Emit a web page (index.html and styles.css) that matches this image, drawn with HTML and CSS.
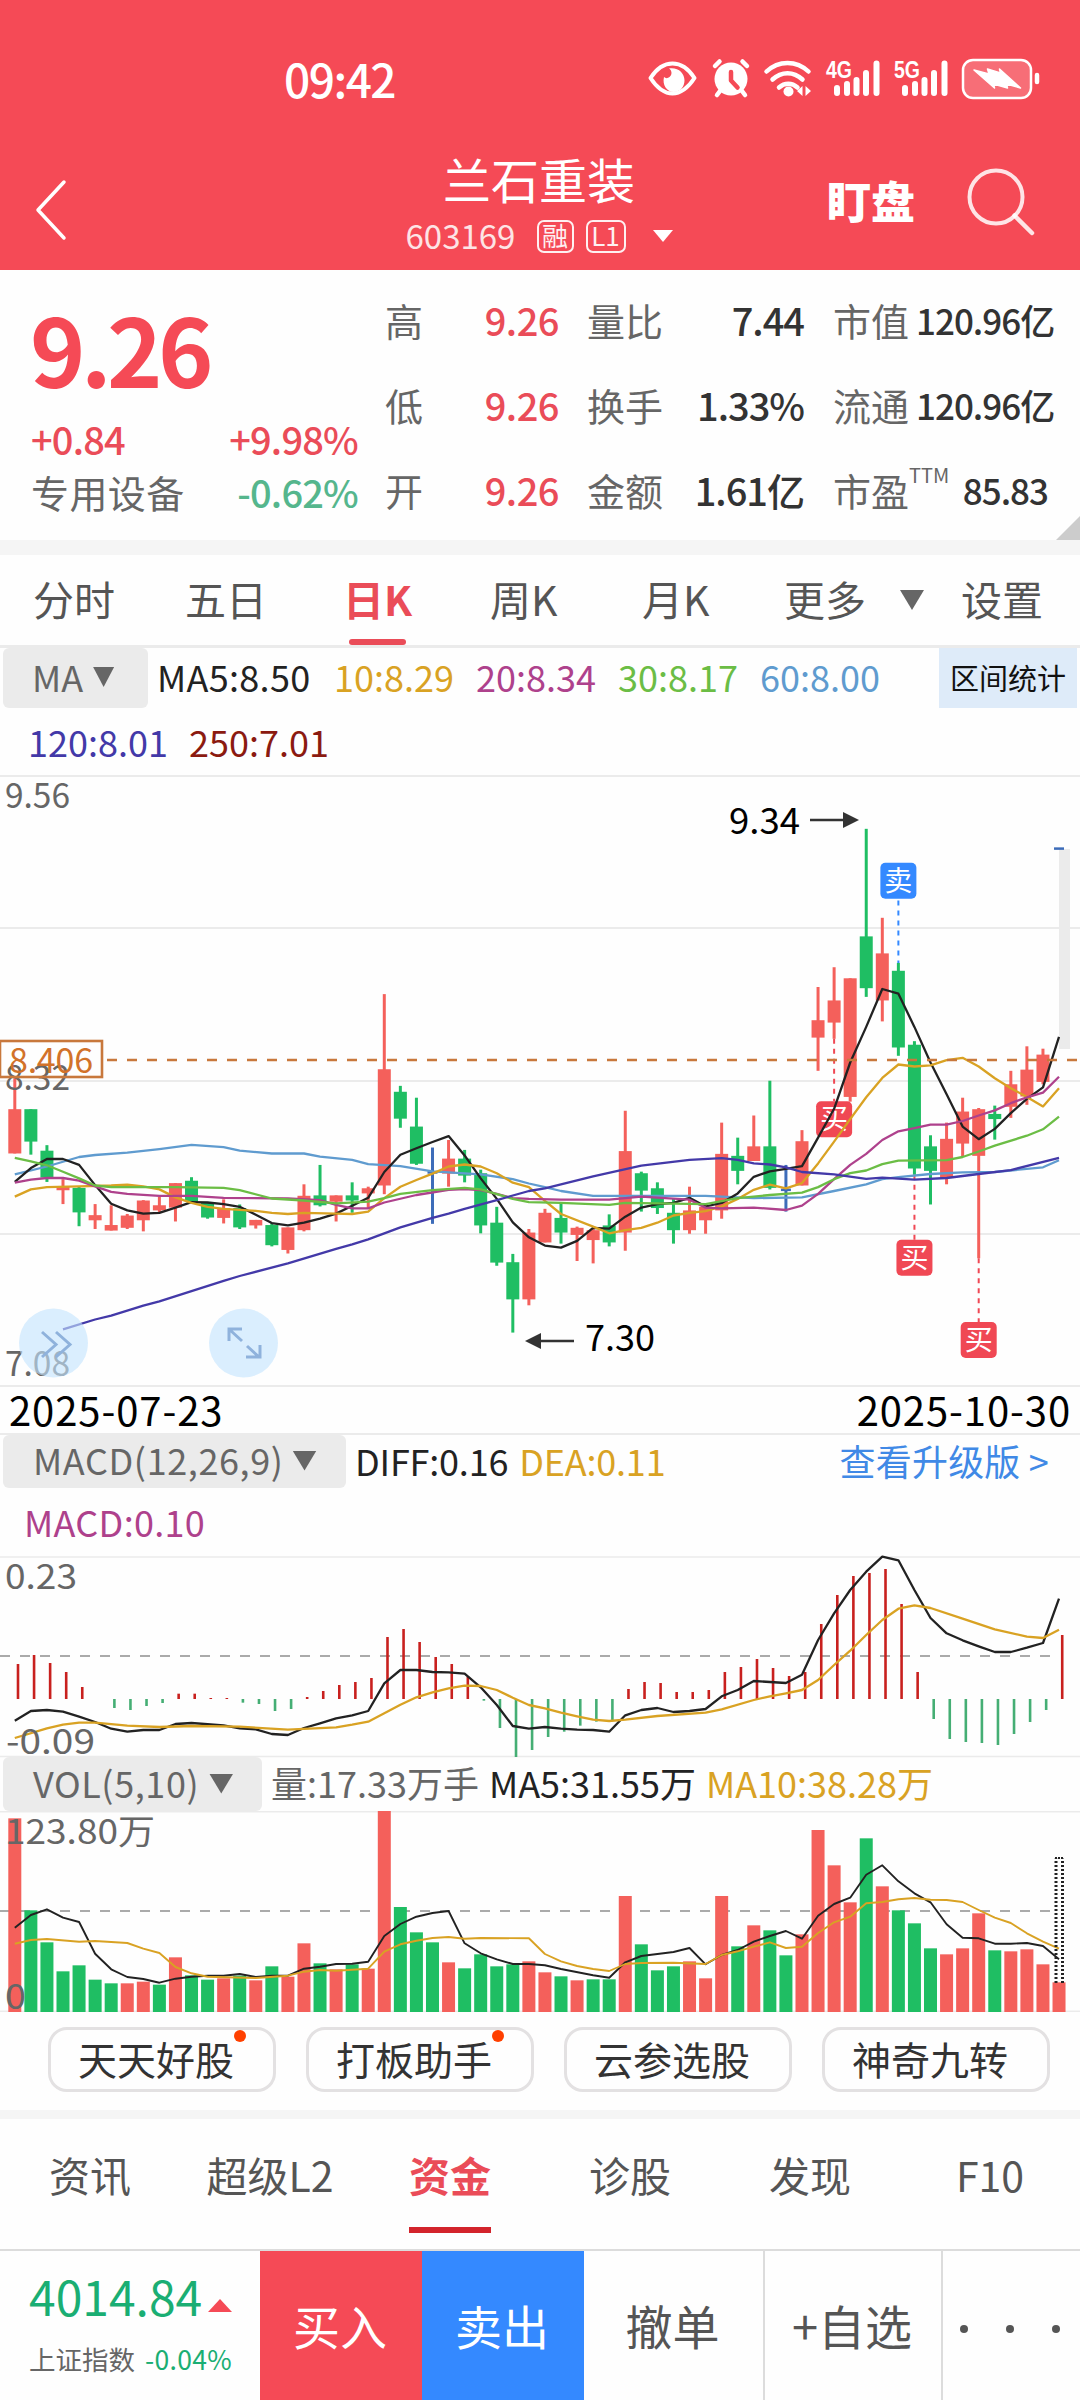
FILE: index.html
```html
<!DOCTYPE html>
<html lang="zh-CN">
<head>
  <meta charset="UTF-8" />
  <meta name="viewport" content="width=device-width, initial-scale=1.0" />
  <title>兰石重装 603169</title>
  <link rel="stylesheet" href="styles.css">
</head>
<body>
  <header class="header">
    <div class="statusbar">
      <span class="clock">09:42</span>
      <svg class="status-icons" width="400" height="44" viewBox="0 0 400 44" fill="none" stroke="#fff" stroke-linecap="round" stroke-linejoin="round">
        <!-- eye -->
        <path d="M2.5 21C9 11 16 6.500 24.500 6.500S40 11 46.500 21C40 31 33 36.500 24.500 36.500S9 31 2.500 21z" stroke-width="4"/>
        <path d="M21 11.500c3 2 3.500 6 .5 8.500-1.800 1.500-4 1.500-5.500 0-2 8 3 15 9.500 15 6.500 0 11-5 11-11.500C36.500 16 30 10 21 11.500z" fill="#fff" stroke="none"/>
        <!-- alarm -->
        <circle cx="83" cy="22" r="16.500" fill="#fff" stroke="none"/>
        <path d="M83 15v8.500l6.500 7" stroke="#f54a56" stroke-width="4.500"/>
        <path d="M67 9l4.500-4.500M99 9l-4.500-4.500M72 34l-3 4M94 34l3 4" stroke-width="4.500"/>
        <!-- wifi -->
        <path d="M118.500 14.500c12-11.500 30-11.500 42 0M124.500 22.500c9-8.500 21-8.500 30 0M131 30.500c5.500-5 13-5 18.500 0" stroke-width="4.500"/>
        <circle cx="140.500" cy="34.500" r="5" fill="#fff" stroke="none"/>
        <path d="M149 34l5.500-5v10zM163 34l-5.500-5v10z" fill="#fff" stroke="none"/>
        <!-- signals -->
        <path d="M189 31v5M199 27v9M208.500 23v13M218 16v20M228.500 6.500V36" stroke-width="6"/>
        <path d="M257 31v5M267 27v9M276.500 23v13M286 16v20M296.500 6.500V36" stroke-width="6"/>
        <text class="net" x="178" y="21" textLength="26" lengthAdjust="spacingAndGlyphs">4G</text>
        <text class="net" x="246" y="21" textLength="26" lengthAdjust="spacingAndGlyphs">5G</text>
        <!-- battery -->
        <rect x="315" y="3" width="68" height="38" rx="10" fill="#fff" fill-opacity=".2" stroke-width="2.500"/>
        <path d="M326 13l15 4-1.500-5 13 4-1-4 21 19-14-4 1 4-14-4 1 4z" fill="#fff" stroke-width="1.500"/>
        <path d="M389 18v7" stroke-width="4.500"/>
      </svg>
    </div>
    <div class="titlebar">
      <svg class="back" width="34" height="62" viewBox="0 0 34 62"><path d="M30 3L4 31l26 28" fill="none" stroke="#fff" stroke-width="3.500" stroke-linecap="round" stroke-linejoin="round"/></svg>
      <div class="stock">
        <h1>兰石重装</h1>
        <div class="code">
          <span class="num">603169</span>
          <span class="tag">融</span>
          <span class="tag tag-l1">L1</span>
          <svg width="20" height="12" viewBox="0 0 20 12"><path d="M0 0h20L10 12z" fill="#fff"/></svg>
        </div>
      </div>
      <span class="watch">盯盘</span>
      <svg class="search" width="70" height="70" viewBox="0 0 70 70" fill="none" stroke="#fff" stroke-opacity=".85" stroke-linecap="round"><circle cx="30" cy="30" r="26.500" stroke-width="4"/><path d="M48.500 48.500L66 66" stroke-width="4.500"/></svg>
    </div>
  </header>

  <section class="quote">
    <div class="price">
      <div class="last">9.26</div>
      <div class="row"><span class="up">+0.84</span><span class="up">+9.98%</span></div>
      <div class="row"><span class="lbl">专用设备</span><span class="down">-0.62%</span></div>
    </div>
    <dl class="stats">
      <dt>高</dt><dd class="up">9.26</dd><dt>量比</dt><dd>7.44</dd><dt>市值</dt><dd class="cap">120.96亿</dd>
      <dt>低</dt><dd class="up">9.26</dd><dt>换手</dt><dd>1.33%</dd><dt>流通</dt><dd class="cap">120.96亿</dd>
      <dt>开</dt><dd class="up">9.26</dd><dt>金额</dt><dd>1.61亿</dd><dt>市盈<sup>TTM</sup></dt><dd class="cap">85.83</dd>
    </dl>
    <i class="corner"></i>
  </section>

  <nav class="period">
    <span>分时</span><span>五日</span><span class="active">日K</span><span>周K</span><span>月K</span>
    <span>更多</span><i class="tri"></i><span>设置</span>
  </nav>

  <section class="ma-legend">
    <div class="legend-row">
      <span class="pick pick-ma">MA<i class="tri"></i></span>
      <span class="c-black ma5">MA5:8.50</span>
      <span class="c-gold">10:8.29</span>
      <span class="c-purple">20:8.34</span>
      <span class="c-green">30:8.17</span>
      <span class="c-sky">60:8.00</span>
      <span class="range">区间统计</span>
    </div>
    <div class="legend-row second">
      <span class="c-indigo">120:8.01</span>
      <span class="c-brown">250:7.01</span>
    </div>
  </section>

  <svg class="chart" id="kline" width="1080" height="612" viewBox="0 0 1080 612"></svg>

  <div class="dates"><span>2025-07-23</span><span>2025-10-30</span></div>

  <section class="macd-legend">
    <div class="legend-row">
      <span class="pick pick-macd">MACD(12,26,9)<i class="tri"></i></span>
      <span class="c-black">DIFF:0.16</span>
      <span class="c-gold dea">DEA:0.11</span>
      <a class="upgrade">查看升级版 &gt;</a>
    </div>
    <div class="legend-row second"><span class="c-purple">MACD:0.10</span></div>
  </section>

  <svg class="chart" id="macd" width="1080" height="201" viewBox="0 0 1080 201"></svg>

  <section class="vol-legend">
    <span class="pick pick-vol">VOL(5,10)<i class="tri"></i></span>
    <span class="c-gray">量:17.33万手</span>
    <span class="c-black vol5">MA5:31.55万</span>
    <span class="c-gold vol10">MA10:38.28万</span>
  </section>

  <svg class="chart" id="vol" width="1080" height="201" viewBox="0 0 1080 201"></svg>

  <div class="tools">
    <span class="pill new">天天好股</span>
    <span class="pill new">打板助手</span>
    <span class="pill">云参选股</span>
    <span class="pill">神奇九转</span>
  </div>

  <nav class="info">
    <span>资讯</span><span>超级L2</span><span class="active">资金</span><span>诊股</span><span>发现</span><span>F10</span>
  </nav>

  <footer class="trade">
    <div class="index">
      <div class="index-val">4014.84<svg width="24" height="13" viewBox="0 0 24 13"><path d="M0 13h24L12 0z" fill="#f54a56"/></svg></div>
      <div class="index-sub"><span>上证指数</span><span class="pct">-0.04%</span></div>
    </div>
    <span class="btn buy">买入</span>
    <span class="btn sell">卖出</span>
    <span class="btn">撤单</span>
    <span class="btn line">+自选</span>
    <span class="btn line more"><i></i><i></i><i></i></span>
  </footer>

  <script src="chart.js"></script>
</body>
</html>
```
FILE: styles.css
```css
* { box-sizing: border-box; }
body { margin: 0; width: 1080px; height: 2400px; background: #fefefe; color: #222; font-family: "Noto Sans CJK SC", "Noto Sans", sans-serif; line-height: 1; overflow: hidden; }
h1, dl, dd { margin: 0; font-weight: normal; }
i { display: block; }
span, a, dt, dd { white-space: nowrap; }

.up { color: #ea4c58; }
.down { color: #55b68d; }
.c-black { color: #222; }
.c-gray { color: #666; }
.c-gold { color: #d9a223; }
.c-purple { color: #ae418c; }
.c-green { color: #6bbd45; }
.c-sky { color: #5f9bcf; }
.c-indigo { color: #4339a8; }
.c-brown { color: #8b1a10; }
.tri { width: 24px; height: 20px; background: #666; clip-path: polygon(0 0, 100% 0, 50% 100%); }

/* header */
.header { height: 270px; background: #f54a56; color: #fff; }
.statusbar { height: 140px; padding: 18px 0 0 284px; display: flex; align-items: center; }
.clock { width: 364px; font-size: 46px; font-weight: 500; letter-spacing: -1.5px; margin-top: -2px; }
.net { font: bold 23px "Liberation Sans", sans-serif; fill: #fff; stroke: none; }
.titlebar { height: 130px; padding-left: 34px; display: flex; align-items: flex-start; }
.back { margin-top: 39px; }
.stock { width: 400px; margin-left: 271px; display: flex; flex-direction: column; align-items: center; padding-top: 12px; }
.stock h1 { font-size: 48px; line-height: 52px; }
.code { display: flex; align-items: center; height: 36px; margin-top: 14px; }
.num { font-size: 33px; opacity: .85; width: 131px; margin-top: -1px; }
.tag { width: 37px; height: 33px; border: 2px solid #fff; border-radius: 7px; font-size: 26px; line-height: 26px; text-align: center; opacity: .92; }
.tag-l1 { width: 40px; margin: 0 27px 0 12px; }
.watch { font-size: 44px; font-weight: 900; margin: 38px 0 0 88px; }
.search { margin: 27px 0 0 51px; }

/* quote */
.quote { position: relative; height: 285px; border-bottom: 15px solid #f5f5f5; padding: 13px 0 0 31px; display: flex; }
.price { width: 327px; }
.last { font-size: 94px; font-weight: bold; color: #f54a56; line-height: 128px; letter-spacing: -4.5px; margin-left: -1px; }
.price .row { display: flex; justify-content: space-between; font-size: 38px; line-height: 53px; letter-spacing: -.8px; }
.price .up, .price .down { font-weight: 500; }
.price .lbl { color: #666; letter-spacing: .4px; }
.price .row:nth-child(2) { margin-top: 1px; }
.stats { display: grid; grid-template-columns: 50px 124px 28px 74px 143px 29px 83px 132px; grid-auto-rows: 85px; margin-left: 27px; font-size: 38px; line-height: 73px; }
.stats dt { color: #666; position: relative; }
.stats dt:nth-of-type(3n+2) { grid-column: 4; }
.stats dt:nth-of-type(3n) { grid-column: 7; }
.stats dd { text-align: right; font-weight: 500; color: #333; letter-spacing: -1px; }
.stats dd.up { color: #ea4c58; letter-spacing: -.5px; }
.stats .cap { font-size: 35px; letter-spacing: -1px; }
.stats sup { position: absolute; left: 76px; top: 2px; font-size: 20px; line-height: 40px; }
.corner { position: absolute; right: 0; bottom: 0; width: 24px; height: 24px; background: #ccc; clip-path: polygon(100% 0, 100% 100%, 0 100%); }

/* period tabs */
.period { height: 93px; border-bottom: 3px solid #ebebeb; display: grid; grid-template-columns: 152px 158px 147px 152px 142px 114px 63px 120px; padding-left: 33px; font-size: 41px; line-height: 87px; color: #555; }
.period .tri { margin: 35px 0 0 2px; }
.period .active { color: #ea4c58; font-weight: bold; position: relative; }
.period .active::after { content: ""; position: absolute; left: 6px; bottom: 0; width: 57px; height: 6px; border-radius: 3px; background: #ea4c58; }

/* legends */
.legend-row { display: flex; font-size: 36px; }
.pick { display: flex; align-items: center; background: #ebebeb; color: #666; border-radius: 6px; margin-left: 3px; font-size: 36px; }
.ma-legend { height: 127px; line-height: 57px; }
.ma-legend .legend-row span { width: 142px; }
.ma-legend .legend-row .pick-ma { width: 145px; height: 60px; padding: 0 0 4px 29px; line-height: 56px; }
.pick-ma .tri { margin: 2px 0 0 10px; width: 21px; }
.ma-legend .legend-row .ma5 { width: 177px; margin-left: 9px; letter-spacing: .3px; }
.ma-legend .legend-row .range { width: 138px; height: 60px; margin-left: 37px; background: #deebf9; color: #111; font-size: 29px; line-height: 58px; text-align: center; }
.ma-legend .second { padding-left: 28px; line-height: 66px; }
.ma-legend .second span { width: 161px; }

.chart { display: block; overflow: visible; }
.dates { display: flex; justify-content: space-between; height: 48px; padding: 0 9px; border-bottom: 2px solid #ebebeb; font-size: 40px; line-height: 45px; letter-spacing: .9px; color: #000; }

.macd-legend { height: 121px; line-height: 51px; }
.pick-macd { width: 343px; height: 53px; padding: 0 0 4px 30px; margin-right: 9px; letter-spacing: .6px; }
.pick-macd .tri { margin: 2px 0 0 9px; }
.dea { margin-left: 11px; }
.dea, .macd-legend .c-black { letter-spacing: -.2px; }
.upgrade { margin-left: auto; padding-right: 31px; color: #4089e6; letter-spacing: .2px; }
.macd-legend .second { padding-left: 24px; line-height: 66px; letter-spacing: .3px; }
.vol-legend { display: flex; height: 54px; font-size: 36px; line-height: 51px; }
.pick-vol { width: 259px; padding: 0 0 3px 30px; margin-right: 9px; letter-spacing: .6px; }
.pick-vol .tri { margin: 2px 0 0 10px; }
.vol5, .vol10 { margin-left: 10px; }

/* chart text */
.axis { font-size: 34px; fill: #666; }
.note { font-size: 36px; fill: #000; }
.mark { font-size: 28px; fill: #fff; text-anchor: middle; }

/* tools */
.tools { display: flex; gap: 30px; height: 98px; padding: 15px 0 0 48px; }
.pill { position: relative; width: 228px; height: 65px; border: 3px solid #e3e1e2; border-radius: 19px; padding-left: 27px; font-size: 39px; line-height: 56px; color: #333; }
.pill.new::after { content: ""; position: absolute; right: 27px; top: 0; width: 12px; height: 12px; border-radius: 50%; background: #ff4000; }

/* info tabs */
.info { display: grid; grid-template-columns: repeat(6, 180px); height: 141px; border-top: 9px solid #f5f5f5; border-bottom: 2px solid #dcdcdc; font-size: 41px; line-height: 111px; text-align: center; color: #555; }
.info .active { position: relative; color: #ea4c58; font-weight: bold; }
.info .active::after { content: ""; position: absolute; left: 49px; bottom: 16px; width: 82px; height: 6px; background: #d3242c; }

/* trade bar */
.trade { display: flex; height: 149px; }
.index { width: 260px; padding-left: 29px; }
.index-val { font-size: 48px; line-height: 88px; color: #1aae73; display: flex; align-items: center; }
.index-val svg { margin: 20px 0 0 6px; }
.index-sub { display: flex; gap: 10px; font-size: 26.5px; line-height: 39px; color: #666; }
.pct { color: #1aae73; letter-spacing: .3px; }
.btn { width: 179px; font-size: 47px; line-height: 147px; text-align: center; color: #555; padding-right: 2px; }
.buy { width: 162px; background: #f54a56; color: #fff; }
.sell { width: 162px; background: #3489ff; color: #fff; }
.line { width: 178px; border-left: 2px solid #dcdcdc; }
.more { width: 139px; display: flex; align-items: center; gap: 38px; padding: 6px 0 0 17px; }
.more i { width: 8px; height: 8px; border-radius: 50%; background: #555; }
```
FILE: chart.js
```js
const NS = "http://www.w3.org/2000/svg";
const RED = "#f4605b", GREEN = "#1fbe63", GOLD = "#d9a223";
const STEP = 16.065;
const X = i => 14.8 + i * STEP;

function el(parent, tag, attrs, text) {
  const n = document.createElementNS(NS, tag);
  for (const k in attrs) n.setAttribute(k, attrs[k]);
  if (text) n.textContent = text;
  parent.appendChild(n);
  return n;
}
function hline(svg, y, attrs) {
  el(svg, "line", { x1: 0, x2: 1080, y1: y, y2: y, stroke: "#ebebeb", "stroke-width": 2, ...attrs });
}
// "i,v i,v ..." -> polyline
function curve(svg, pts, Y, color, w = 2.3) {
  const points = pts.split(" ").map(p => {
    const [i, v] = p.split(",");
    return X(+i).toFixed(1) + "," + Y(+v).toFixed(1);
  }).join(" ");
  el(svg, "polyline", { points, fill: "none", stroke: color, "stroke-width": w, "stroke-linejoin": "round" });
}
function label(svg, x, y, w, text, cls = "axis") {
  el(svg, "text", { x, y, class: cls, textLength: w, lengthAdjust: "spacingAndGlyphs" }, text);
}

/* ---------- K line ---------- */
const k = document.getElementById("kline");
const KY = v => v / 2.529 + 4.8;
[1, 153, 306, 459, 611].forEach(y => hline(k, y));

// high, body top, body bottom, low
const candles = `r755,833,945,945 g833,833,915,948 g924,938,1006,1017 r1010,1028,1038,1073 g1028,1032,1094,1129
r1073,1101,1114,1136 r1076,1126,1140,1140 r1098,1102,1133,1136 r1063,1064,1114,1142 r1055,1076,1089,1094
r1020,1020,1082,1117 g1005,1014,1067,1070 g1070,1070,1107,1110 r1061,1083,1108,1122 g1074,1083,1132,1136
r1113,1113,1127,1135 g1120,1126,1177,1180 r1132,1132,1189,1198 r1023,1052,1139,1142 g974,1051,1076,1079
r1051,1051,1067,1117 g1018,1051,1064,1095 r1029,1033,1046,1083 r542,732,1026,1048 g774,789,857,880
g804,877,971,974 b930,993,993,1123 r911,958,996,1029 g936,958,1001,1018 g986,995,1127,1147
g1080,1120,1221,1229 g1199,1220,1314,1398 r1136,1145,1314,1329 r1085,1095,1170,1170 g1070,1108,1145,1173
r1130,1133,1151,1217 r1136,1139,1164,1223 g1099,1127,1170,1180 r837,939,1145,1191 g991,995,1039,1092
g1018,1033,1083,1098 g1060,1095,1139,1173 r1029,1089,1139,1148 r1075,1080,1114,1148 r867,946,1089,1110
g905,951,989,1023 r849,927,964,964 g761,927,1032,1036 b974,1037,1037,1092 r886,914,1026,1026
r524,608,652,736 r474,558,614,655 r502,502,802,814 g124,396,527,549 r349,439,558,611
g463,483,677,698 g661,670,983,999 g899,927,989,1074 r867,908,1007,1023 r804,839,920,954
r830,833,951,1210 g824,845,858,910 r736,770,827,855 r674,733,801,822 r680,695,764,770
b174,174,174,174`.split(/\s+/);

el(k, "rect", { x: 1059, y: KY(175), width: 11, height: 200, fill: "#ebebeb" });
candles.forEach((c, i) => {
  const [hi, top, bot, lo] = c.slice(1).split(",").map(v => KY(+v));
  const x = X(i);
  const color = { r: RED, g: GREEN, b: "#3d6cb9" }[c[0]];
  el(k, "line", { x1: x, x2: x, y1: hi, y2: lo, stroke: color, "stroke-width": 3 });
  if (c[0] === "b") el(k, "line", { x1: x - 5, x2: x + 5, y1: top, y2: top, stroke: color, "stroke-width": 2.5 });
  else el(k, "rect", { x: x - 6.5, y: top, width: 13, height: bot - top, fill: color });
});

// trade marks
[[55, "卖", 210, 305, 463, "#3489ff"], [51, "买", 813, 655, 813, "#f04854"], [56, "买", 1163, 999, 1163, "#f04854"], [60, "买", 1371, 1210, 1371, "#f04854"]].forEach(([i, t, y, a, b, color]) => {
  const x = X(i);
  el(k, "line", { x1: x, x2: x, y1: KY(a), y2: KY(b), stroke: color, "stroke-width": 2, "stroke-dasharray": "5 5" });
  el(k, "rect", { x: x - 18, y: KY(y), width: 36, height: 36, rx: 5, fill: color });
  el(k, "text", { x, y: KY(y) + 28, class: "mark" }, t);
});

curve(k, "0,998 2,978 4,954 5,949 7,943 9,934 11,923 13,929 14,938 16,945 18,945 19,953 21,961 22,972 24,977 26,990 29,998 31,1010 32,1021 33,1030 34,1040 36,1052 43,1052 46,1058 49,1056 51,1040 53,1023 54,1010 55,1005 57,997 59,993 61,992 64,980 65,962", KY, "#5f9bcf");
curve(k, "0,1017 1,982 2,959 3,959 4,974 5,1025 6,1072 7,1089 8,1097 9,1095 10,1082 11,1068 12,1069 13,1073 14,1080 15,1100 16,1121 17,1127 18,1120 19,1110 20,1097 21,1077 22,1057 23,992 24,948 25,932 26,916 27,901 28,950 29,1008 30,1060 31,1119 32,1157 33,1178 34,1183 35,1166 36,1133 37,1135 38,1105 39,1082 40,1073 41,1070 42,1057 43,1079 44,1070 45,1046 46,1004 47,990 48,984 49,977 50,905 51,832 52,715 53,625 54,529 55,541 56,625 57,715 58,795 59,877 60,909 61,883 62,843 63,807 64,778 65,650", KY, "#222");
curve(k, "0,1054 1,1036 2,1030 4,1028 6,1026 7,1024 8,1028 9,1036 10,1056 11,1070 12,1080 13,1085 15,1090 16,1095 17,1098 18,1095 20,1097 21,1098 22,1092 23,1058 24,1029 25,1012 26,996 27,978 28,973 29,978 30,995 31,1019 32,1030 33,1065 34,1098 36,1130 37,1147 38,1139 39,1133 40,1120 41,1102 42,1095 43,1091 44,1079 45,1060 46,1037 47,1024 48,1033 49,1020 50,970 51,915 52,858 53,803 54,754 55,720 56,725 57,722 58,709 59,703 60,725 61,755 62,780 63,802 64,826 65,780", KY, GOLD);
curve(k, "0,1019 1,1011 2,1007 3,1007 4,1014 5,1028 6,1042 7,1047 9,1052 11,1052 13,1057 17,1059 19,1063 20,1075 21,1084 22,1084 23,1069 25,1050 27,1037 28,1035 29,1038 30,1047 31,1058 32,1060 34,1062 37,1062 39,1054 42,1062 43,1082 44,1084 46,1082 48,1088 49,1077 50,1047 51,1010 52,974 53,946 54,911 55,889 56,881 57,872 58,872 59,863 60,849 61,836 62,818 63,803 64,791 65,751", KY, "#ae418c");
curve(k, "0,956 1,965 2,975 3,991 4,1008 5,1026 6,1030 10,1030 13,1032 14,1038 16,1059 18,1064 20,1071 22,1067 23,1058 24,1047 26,1038 28,1032 29,1036 31,1060 32,1068 34,1070 37,1075 38,1070 43,1073 45,1058 47,1050 49,1044 50,1030 51,1010 52,995 53,988 54,972 55,963 58,962 59,954 60,940 61,925 63,900 64,884 65,852", KY, "#6bbd45");
curve(k, "3,1390 5,1365 6,1355 8,1330 9,1319 11,1293 13,1267 14,1255 17,1223 20,1186 21,1175 22,1162 23,1147 24,1132 26,1108 27,1097 28,1085 30,1063 32,1040 33,1033 36,1003 39,976 42,961 44,957 45,961 46,970 47,973 48,980 49,992 51,998 53,1009 54,1006 56,1011 58,1007 60,997 62,987 65,956", KY, "#4339a8");

// cost line
hline(k, 285, { x1: 107, stroke: "#c8783c", "stroke-width": 2.6, "stroke-dasharray": "10 10" });
label(k, 5, 33, 65, "9.56");
label(k, 5, 315, 65, "8.32");
label(k, 5, 601, 65, "7.08");
el(k, "rect", { x: 0, y: 266, width: 102, height: 36, fill: "none", stroke: "#c8783c", "stroke-width": 2.6 });
el(k, "text", { x: 9, y: 298, class: "axis", textLength: 84, style: "fill:#d2722a" }, "8.406");

label(k, 729, 59, 71, "9.34", "note");
el(k, "path", { d: "M810 45h40", stroke: "#333", "stroke-width": 2.6 });
el(k, "path", { d: "M843 37l16 8-16 8z", fill: "#333" });
label(k, 585, 576, 70, "7.30", "note");
el(k, "path", { d: "M535 566h39", stroke: "#333", "stroke-width": 2.6 });
el(k, "path", { d: "M541 558l-16 8 16 8z", fill: "#333" });

// round buttons over the chart
[53.5, 243.5].forEach(x => el(k, "circle", { cx: x, cy: 568, r: 34.5, fill: "#c3e3fe", "fill-opacity": .62 }));
el(k, "path", { d: "M42 557l14 12.500-14 12.500M56 557l14 12.500-14 12.500M229 566v-12h13M230 555l12 11M247 571l12 11M260 570v12h-14", fill: "none", stroke: "#8fb2dc", "stroke-width": 3 });

/* ---------- MACD ---------- */
const m = document.getElementById("macd");
const MY = v => v / 3 - 176;
hline(m, 1, { "stroke-width": 1.5 });
hline(m, 200.5, { "stroke-width": 1.5 });
hline(m, 100, { x2: 1060, stroke: "#aaa", "stroke-dasharray": "10 10" });
[852, 825, 849, 876, 921, 957, 984, 990, 978, 969, 941, 941, 954, 954, 968, 972, 993, 987, 951, 933, 915, 906, 894, 771, 747, 786, 831, 852, 890, 962, 1044, 1131, 1110, 1071, 1055, 1037, 1025, 1020, 927, 906, 909, 936, 936, 930, 876, 861, 837, 864, 888, 876, 732, 645, 588, 579, 567, 672, 876, 1017, 1077, 1086, 1089, 1095, 1062, 1026, 990, 765].forEach((v, i) => {
  const x = X(i) + 3.2;
  el(m, "line", { x1: x, x2: x, y1: MY(957), y2: MY(v), stroke: v < 957 ? "#c8201e" : "#45ae74", "stroke-width": 2.6 });
});
curve(m, "0,1022 1,993 2,990 3,995 4,1010 5,1026 6,1046 7,1055 8,1050 9,1050 10,1032 11,1029 13,1036 14,1045 15,1048 16,1062 17,1065 18,1044 19,1030 20,1015 21,1006 22,993 23,910 24,870 25,870 26,876 27,877 28,881 29,922 30,975 31,1038 32,1046 33,1041 34,1046 35,1049 36,1050 37,1055 38,1006 39,990 40,984 41,996 42,993 43,987 44,949 45,930 46,903 47,906 48,909 49,884 50,780 51,700 52,630 53,575 54,530 55,541 56,630 57,714 58,760 59,781 60,799 61,816 62,816 63,803 64,789 65,656", MY, "#222");
curve(m, "0,1074 2,1045 3,1034 4,1028 5,1028 7,1037 9,1041 11,1038 14,1040 17,1049 20,1042 21,1034 22,1025 23,1000 24,974 25,952 26,937 27,925 28,917 29,918 30,930 31,953 32,975 33,985 34,998 35,1009 36,1019 37,1023 38,1019 40,1008 43,998 44,988 46,960 47,949 48,940 49,930 50,900 51,855 52,812 53,765 54,720 55,686 56,676 57,684 59,716 61,748 63,770 64,774 65,749", MY, GOLD);
label(m, 5, 33, 72, "0.23");
label(m, 6, 198, 89, "-0.09");

/* ---------- volume ---------- */
const vol = document.getElementById("vol");
const VY = v => v / 3 - 61;
hline(vol, .7, { "stroke-width": 1.5 });
hline(vol, 200.3, { "stroke-width": 1.5 });
hline(vol, 100, { x2: 1060, stroke: "#aaa", "stroke-dasharray": "10 10" });
"r205 g481 g577 g664 g646 g689 g700 r700 r695 g704 r622 g676 g689 r685 g677 r691 g649 r680 r580 g640 r658 g643 r656 r183 g471 g547 g577 r637 g655 g613 g649 g643 r634 r667 g679 r691 g688 g688 r438 g583 g661 g649 r634 r685 r438 g589 r526 g541 g616 r553 r240 r346 r457 g265 r409 g481 g520 g595 r613 r595 r490 g601 r604 r598 r643 r697".split(" ").forEach((b, i) => {
  const y = VY(+b.slice(1));
  el(vol, "rect", { x: X(i) - 6.5, y, width: 13, height: 201 - y, fill: b[0] === "r" ? RED : GREEN });
});
curve(vol, "0,533 1,495 2,478 3,503 4,516 5,611 6,658 7,681 8,687 9,698 10,686 11,680 12,677 13,677 14,672 15,681 16,677 17,677 18,656 19,650 20,642 21,641 22,635 23,558 24,522 25,500 26,489 27,483 28,580 29,610 30,628 31,642 32,642 33,646 34,657 36,676 37,683 38,637 39,618 40,612 41,606 42,594 43,643 44,615 45,600 46,575 47,558 48,543 49,566 50,497 51,462 52,443 53,374 54,346 55,394 56,430 57,457 58,523 59,563 60,565 61,581 62,581 63,579 64,588 65,628", VY, "#222", 1.9);
curve(vol, "0,581 1,570 2,567 4,575 5,573 7,579 8,596 9,609 10,651 11,670 12,680 15,684 17,677 18,665 19,660 20,662 22,656 23,605 24,583 25,572 26,564 27,561 28,566 29,564 32,565 33,612 34,634 35,648 36,657 37,663 38,642 39,639 41,638 43,642 44,615 45,604 46,590 47,577 48,594 49,590 50,549 51,517 52,500 53,460 54,456 55,448 56,444 57,449 58,450 59,456 60,480 61,503 62,519 63,550 64,575 65,596", VY, GOLD, 1.9);
el(vol, "path", { d: "M1056 172V47.500M1062.500 172V47.500", fill: "none", stroke: "#222", "stroke-width": 3, "stroke-dasharray": "2 2" });
el(vol, "path", { d: "M1055 47h9", stroke: "#222", "stroke-width": 2, "stroke-dasharray": "2 1" });
label(vol, 5, 33, 150, "123.80万");
label(vol, 5, 198, 21, "0");
```
